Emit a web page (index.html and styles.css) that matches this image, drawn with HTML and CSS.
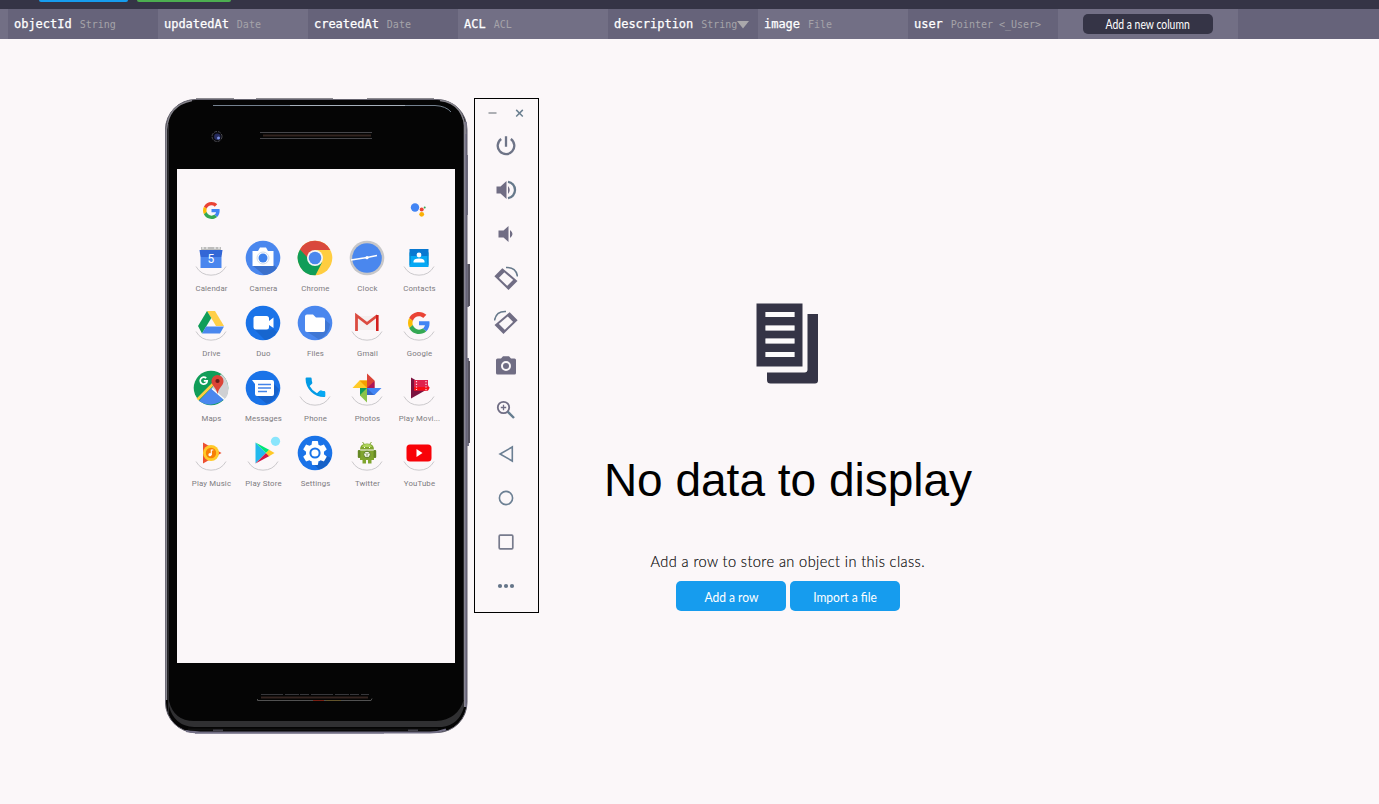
FILE: index.html
```html
<!DOCTYPE html>
<html lang="en">
<head>
<meta charset="utf-8">
<title>Data browser</title>
<link rel="stylesheet" href="styles.css">
</head>
<body>
<svg class="defs" width="0" height="0" aria-hidden="true">
  <symbol id="google" viewBox="0 0 48 48">
    <path fill="#ea4335" d="M24 9.5c3.54 0 6.71 1.22 9.21 3.6l6.85-6.85C35.9 2.38 30.47 0 24 0 14.62 0 6.51 5.38 2.56 13.22l7.98 6.19C12.43 13.72 17.74 9.5 24 9.5z"/>
    <path fill="#4285f4" d="M46.98 24.55c0-1.57-.15-3.09-.38-4.55H24v9.02h12.94c-.58 2.96-2.26 5.48-4.78 7.18l7.73 6c4.51-4.18 7.09-10.36 7.09-17.65z"/>
    <path fill="#fbbc05" d="M10.53 28.59c-.48-1.45-.76-2.99-.76-4.59s.27-3.14.76-4.59l-7.98-6.19C.92 16.46 0 20.12 0 24s.92 7.54 2.56 10.78l7.97-6.19z"/>
    <path fill="#34a853" d="M24 48c6.48 0 11.93-2.13 15.89-5.81l-7.73-6c-2.15 1.45-4.92 2.3-8.16 2.3-6.26 0-11.57-4.22-13.47-9.91l-7.98 6.19C6.51 42.62 14.62 48 24 48z"/>
  </symbol>
  <symbol id="arc" viewBox="0 0 36 36">
    <path d="M3 26.500A17.300 17.300 0 0 0 33 26.500" fill="none" stroke="#cbc9cc" stroke-width="1"/>
  </symbol>
</svg>

<div class="topbar"><span class="tab tab-blue"></span><span class="tab tab-green"></span></div>

<header class="columns">
  <div class="gutter"></div>
  <div class="col"><b>objectId</b><i>String</i></div>
  <div class="col light"><b>updatedAt</b><i>Date</i></div>
  <div class="col"><b>createdAt</b><i>Date</i></div>
  <div class="col light"><b>ACL</b><i>ACL</i></div>
  <div class="col"><b>description</b><i>String</i><svg class="caret" width="12" height="8" viewBox="0 0 12 8"><path d="M0 0h12L6 7.500z" fill="#aaa8ab"/></svg></div>
  <div class="col light"><b>image</b><i>File</i></div>
  <div class="col"><b>user</b><i>Pointer &lt;_User&gt;</i></div>
  <div class="add light"><button class="add-btn"><span>Add a new column</span></button></div>
</header>

<main class="main">
  <section class="phone">
    <svg class="frame" width="305" height="636" viewBox="165 98 305 636">
      <path d="M464 155h4v60h-4zM465 264h4v43h-4zM465 358h4v88h-4z" fill="#77748a"/>
      <path d="M469 264v42M469 361v82" stroke="#55525f" stroke-width="2"/>
      <path d="M196 98.500h38M256 98.500h77M367 98.500h67" stroke="#8c8a90" stroke-width="1"/>
      <rect x="165.500" y="99.500" width="301.500" height="633" rx="30" fill="#050505" stroke="#65636f"/>
      <path d="M166.500 130v570" stroke="#8a8992" stroke-width="1.500"/>
      <path d="M168.500 124v590M463.500 120v580" stroke="#29292d"/>
      <path d="M465.500 122v585" stroke="#77748a" stroke-width="2.500"/>
      <path d="M464.500 122v585" stroke="#9b9a9f" stroke-width=".7"/>
      <path d="M166.500 130Q168 105 192 100.500M440 100.500Q465 103 465.500 134" fill="none" stroke="#85838b" stroke-width="1.500"/>
      <path d="M213 105.500H435Q446 106 451 112" fill="none" stroke="#74818f"/>
      <path d="M290 105.500H405" stroke="#b2bcc7" stroke-width=".8"/>
      <path d="M169 701q5 20 25 20h242q22-1 28-22v8q-5 18-22 20H194q-20-1-25-21z" fill="#303032"/>
      <path d="M188 729.500h250" stroke="#111" stroke-width="2"/>
      <path d="M186 731q8 1.500 20 1.500h224q8 0 16-3" fill="none" stroke="#716e84" stroke-width="2"/>
      <path d="M195 733.500h189" stroke="#8e8b9d"/>
      <path d="M213 730.500h10M408 730.500h10" stroke="#44434c" stroke-width="2"/>
      <circle cx="217" cy="136.500" r="5" fill="#08080b" stroke="#4a4a52" stroke-dasharray="3 1"/>
      <circle cx="217.300" cy="136.700" r="3.200" fill="#262b5c"/>
      <circle cx="218.500" cy="138" r="1.500" fill="#7c8fe0"/>
      <path d="M260 132.500h112M260 138.500h112" stroke="#46464a"/>
      <path d="M263 135.500h108" stroke="#33241f" stroke-width="2"/>
      <path d="M261 694.500h108" stroke="#37373b" stroke-dasharray="22 2 14 1 9 2"/>
      <path d="M261 697.500h107" stroke="#352521" stroke-width="2"/>
      <path d="M257.500 699v1.500H371l1-2" fill="none" stroke="#515151"/>
      <path d="M313 700.500h11" stroke="#791f12"/><path d="M326 700.500h15" stroke="#62542b"/>
    </svg>
    <div class="screen">
      <div class="search">
        <svg width="17" height="17"><use href="#google"/></svg>
        <svg width="18" height="18" viewBox="0 0 18 18"><circle cx="6" cy="6.500" r="4.200" fill="#4285f4"/><circle cx="12.700" cy="8.500" r="2" fill="#ea4335"/><circle cx="12.700" cy="13.300" r="2.400" fill="#fbb105"/><circle cx="15.700" cy="6.500" r="1" fill="#34a853"/></svg>
      </div>
      <div class="apps">
        <div class="app"><svg viewBox="0 0 36 36"><use href="#arc"/><path d="M8 7h20v4H8z" fill="#bdbdbd"/><path d="M10 7v2M14 7v2M22 7v2M26 7v2" stroke="#fff"/><path d="M6.500 10h23l-1 7h-21z" fill="#3367d6"/><path d="M7.500 17h21v11h-21z" fill="#4a86ee"/><text x="18" y="23.300" text-anchor="middle" class="daynum">5</text></svg><span>Calendar</span></div>

        <div class="app"><svg viewBox="0 0 36 36"><circle cx="18" cy="18" r="17.300" fill="#4a87ee"/><path d="M18 26l11-1 3 3q-6 7-13 7l-11-9z" fill="#3b70cb"/><path d="M7.500 11h5.500l2-3.500h6l2 3.500h5.500v15h-21z" fill="#fff"/><circle cx="18" cy="18" r="6" fill="none" stroke="#d0dced"/><circle cx="18" cy="18" r="4.500" fill="#3f83ee"/></svg><span>Camera</span></div>

        <div class="app"><svg viewBox="0 0 36 36"><circle cx="18" cy="18" r="17.300" fill="#ffcd40"/><path d="M3 9.400A17.300 17.300 0 0 1 33.300 10H18L11 22z" fill="#d9493d"/><path d="M3 9.400A17.300 17.300 0 0 0 18.500 35.300L25 22.500H15z" fill="#109d58"/><circle cx="18" cy="18" r="8" fill="#f5f5f5"/><circle cx="18" cy="18" r="6.300" fill="#4a87ee"/></svg><span>Chrome</span></div>

        <div class="app"><svg viewBox="0 0 36 36"><circle cx="18" cy="18" r="17.300" fill="#c7c7c9"/><circle cx="18" cy="18" r="14.800" fill="#4a87ee"/><path d="M2 20l16-2.500 10-2" stroke="#fff" stroke-width="1.400"/><circle cx="18" cy="17.700" r="1.600" fill="#fff"/></svg><span>Clock</span></div>

        <div class="app"><svg viewBox="0 0 36 36"><use href="#arc"/><path d="M8.500 9h19v7h-19z" fill="#0878d1"/><path d="M8.500 16h19v11h-19z" fill="#06a8f4"/><path d="M8.500 12l1.200 2v9l-1.200 3zM27.500 12l-1.200 2v9l1.200 3z" fill="#0288d1"/><circle cx="18" cy="15" r="2.400" fill="#fff"/><path d="M12.500 22.500v-1q0-3 5.500-3t5.500 3v1z" fill="#fff"/></svg><span>Contacts</span></div>

        <div class="app"><svg viewBox="0 0 36 36"><use href="#arc"/><path d="M14 6h8l9 15h-8z" fill="#ffcf48"/><path d="M14 6l4.300 7L9 28.500 5 21z" fill="#0f9d58"/><path d="M13 21.500h18L27 28.500H9z" fill="#4a87ee"/></svg><span>Drive</span></div>

        <div class="app"><svg viewBox="0 0 36 36"><circle cx="18" cy="18" r="17.300" fill="#1a73e8"/><path d="M10 25h15l3-1 4 3q-5 7-12 8z" fill="#1766cf"/><rect x="8.500" y="11" width="15.500" height="13.500" rx="2.500" fill="#fff"/><path d="M24 16l4.500-3.500v10.500L24 20z" fill="#fff"/></svg><span>Duo</span></div>

        <div class="app"><svg viewBox="0 0 36 36"><circle cx="18" cy="18" r="17.300" fill="#4a87ee"/><path d="M9 26l18 1v-13l6 5q-1 11-11 15.500z" fill="#3f77d4"/><path d="M10 9.500h6l3 3h7q2 0 2 2v10.500q0 2-2 2H10q-2 0-2-2V11.500q0-2 2-2z" fill="#fff"/></svg><span>Files</span></div>

        <div class="app"><svg viewBox="0 0 36 36"><use href="#arc"/><path d="M9 11h18v14H9z" fill="#f5f0f0"/><path d="M7.500 26V10.500L18 18.500l10.500-8" fill="none" stroke="#db4b40" stroke-width="2.800"/><path d="M28.300 10v16" stroke="#d21f1d" stroke-width="2.600"/></svg><span>Gmail</span></div>

        <div class="app"><svg viewBox="0 0 36 36"><use href="#arc"/><use href="#google" x="7" y="7" width="22" height="22"/></svg><span>Google</span></div>

        <div class="app"><svg viewBox="0 0 36 36"><circle cx="18" cy="18" r="17.300" fill="#109d58"/><path d="M28 4q7 5 7.300 14T31 29L19 18z" fill="#cfd0d3"/><path d="M6 31q12 8 25-1.500L18.500 17.500z" fill="#4a87ee"/><path d="M4.500 29.500L25 9" stroke="#ffcd40" stroke-width="2.600"/><path d="M19 18.500l12.500 11" stroke="#fff" stroke-width="1.500"/><path d="M13.200 8.200A3.500 3.500 0 1 0 14.200 10.900H10.800" fill="none" stroke="#fff" stroke-width="1.700"/><path d="M18.500 11a6 6 0 0 1 12 0c0 5-4.700 6-6 13-1.300-7-6-8-6-13z" fill="#db4437"/><circle cx="24.500" cy="11" r="2.100" fill="#671d19"/></svg><span>Maps</span></div>

        <div class="app"><svg viewBox="0 0 36 36"><circle cx="18" cy="18" r="17.300" fill="#1a73e8"/><path d="M11 25l16 1 2-12 5 5q-2 11-12 15z" fill="#1762cb"/><path d="M7 10h20q2 0 2 2v12q0 2-2 2H12q-2 0-2-2V14z" fill="#fff"/><path d="M13 14.500h13M13 18h13M13 21.500h9" stroke="#4384e8" stroke-width="1.500"/></svg><span>Messages</span></div>

        <div class="app"><svg viewBox="0 0 36 36"><use href="#arc"/><path transform="translate(5.200 5.500) scale(1.050)" d="M4.200 2H8q1 0 1 1 0 2 .6 3.600.2.700-.3 1.200L7.100 10q2.400 4.600 7 6.900l2.200-2.200q.5-.5 1.200-.3Q19 15 21 15q1 0 1 1v3.500q0 1-1 1C11.300 20.500 3.200 12.700 3.200 3q0-1 1-1z" fill="#039be5"/><path d="M22 22l2-1.500 4 1v5l-6.500-1.500z" fill="#05a9f4"/></svg><span>Phone</span></div>

        <div class="app"><svg viewBox="0 0 36 36"><use href="#arc"/><path d="M18 18V3.500l7.500 7v7.500z" fill="#db4437"/><path d="M18 18l7.500-7v7z" fill="#ad1457"/><path d="M18 18h14.500l-7 7H18z" fill="#4285f4"/><path d="M18 18l7 7h-7z" fill="#3467c5"/><path d="M18 18v14.500l-7-7V18z" fill="#8bc34a"/><path d="M18 18l-7 7v-7z" fill="#0f9d58"/><path d="M18 18H3.500l7-7.500H18z" fill="#ffca28"/><path d="M18 18l-7.500-7.500H18z" fill="#f4a000"/></svg><span>Photos</span></div>

        <div class="app"><svg viewBox="0 0 36 36"><use href="#arc"/><path d="M10 7.500L28.500 18 10 28.500z" fill="#7b123f"/><path d="M13 10h14v5l1.500 3-1.500 2.500H13z" fill="#e0224c"/><path d="M13 17h15.500L27 20.500H13z" fill="#f70d15"/><path d="M15.500 11v9M25 11v9" stroke="#ffdce2" stroke-width="1.200" stroke-dasharray="1.200 1.500"/></svg><span>Play Movi...</span></div>

        <div class="app"><svg viewBox="0 0 36 36"><use href="#arc"/><path d="M10 7.500L28.500 18 10 28.500z" fill="#ed5030"/><circle cx="18" cy="18" r="8" fill="#ffc928"/><circle cx="18" cy="18" r="5.200" fill="#f77f05"/><circle cx="17" cy="19.700" r="1.600" fill="#fff"/><path d="M18.300 20v-5h2" fill="none" stroke="#fff" stroke-width="1.100"/></svg><span>Play Music</span></div>

        <div class="app"><svg viewBox="0 0 36 36"><use href="#arc"/><path d="M10.500 7.500L21 18 10.500 28.500z" fill="#22b9ed"/><path d="M10.500 7.500L24.500 15 21 18z" fill="#00e676"/><path d="M10.500 28.500L24.500 21 21 18z" fill="#d41745"/><path d="M24 14.700L29.500 18 24 21.300 21 18z" fill="#ffc928"/><circle cx="30.500" cy="6.300" r="4.600" fill="#8ae5fc"/></svg><span>Play Store</span></div>

        <div class="app"><svg viewBox="0 0 36 36"><circle cx="18" cy="18" r="17.300" fill="#1a73e8"/><path d="M13 25l9 3 6-8 6 3q-3 9-12 11.500z" fill="#1661c7"/><path transform="translate(3.600 3.600) scale(1.200)" fill="#fff" d="M19.430 12.980c.04-.32.07-.64.07-.98s-.03-.66-.07-.98l2.110-1.650c.19-.15.24-.42.12-.64l-2-3.460c-.12-.22-.39-.3-.61-.22l-2.490 1c-.52-.4-1.080-.73-1.690-.98l-.38-2.650A.49.49 0 0 0 14 2h-4c-.25 0-.46.18-.49.42l-.38 2.650c-.61.25-1.170.59-1.690.98l-2.490-1c-.23-.09-.49 0-.61.22l-2 3.460c-.13.22-.07.49.12.64l2.110 1.650c-.04.32-.07.65-.07.98s.03.66.07.98l-2.110 1.650c-.19.15-.24.42-.12.64l2 3.460c.12.22.39.3.61.22l2.490-1c.52.4 1.080.73 1.690.98l.38 2.650c.03.24.24.42.49.42h4c.25 0 .46-.18.49-.42l.38-2.650c.61-.25 1.170-.59 1.690-.98l2.490 1c.23.09.49 0 .61-.22l2-3.460c.12-.22.07-.49-.12-.64z"/><circle cx="18" cy="18" r="4.600" fill="#fff" stroke="#1a73e8" stroke-width="2"/></svg><span>Settings</span></div>

        <div class="app"><svg viewBox="0 0 36 36"><use href="#arc"/><path d="M11 14.500q0-6 7-6t7 6zM11 15.500h14V25H11zM13.500 24h3.500v4.500h-3.500zM19 24h3.500v4.500H19z" fill="#80a52e"/><path d="M13.500 7l2 2.500M22.500 7l-2 2.500" stroke="#82a733"/><path d="M13 12q1-3 5-3t5 3z" fill="#add35c"/><rect x="8.800" y="15" width="2.600" height="8" rx="1" fill="#658825"/><rect x="24.600" y="15" width="2.600" height="8" rx="1" fill="#658825"/><circle cx="18" cy="19.500" r="3.300" fill="#f4f5e9" stroke="#597c20"/><path d="M16.500 18l1.500 1.500 1.500-1.500M18 19.500v2" stroke="#66833d" fill="none" stroke-width=".8"/><path d="M15 12.500h1M20 12.500h1" stroke="#fff"/></svg><span>Twitter</span></div>

        <div class="app"><svg viewBox="0 0 36 36"><use href="#arc"/><rect x="5.500" y="9.500" width="25" height="17" rx="3.500" fill="#f80208"/><path d="M15.500 14l6 4-6 4z" fill="#fff"/></svg><span>YouTube</span></div>
      </div>
    </div>
  </section>

  <aside class="tools">
    <div class="winctl">
      <svg width="9" height="9" viewBox="0 0 9 9"><path d="M.5 4h8" stroke="#9a9da3" stroke-width="1.600"/></svg>
      <svg width="9" height="9" viewBox="0 0 9 9"><path d="M1.200 .9l6.600 6.600M7.800 .9L1.200 7.500" stroke="#6b8091" stroke-width="1.500"/></svg>
    </div>
    <div class="tool"><svg viewBox="0 0 24 24"><path d="M7.200 5A8.300 8.300 0 1 0 16.800 5M12 2.300v10.400" fill="none" stroke="#6e7487" stroke-width="2.300"/></svg></div>
    <div class="tool"><svg viewBox="0 0 24 24"><path d="M2.500 8.500h4l6-5.500v18l-6-5.500h-4zM14 8q3.500 4 0 8z" fill="#706d84"/><path d="M14 3.800a8.300 8.300 0 0 1 0 16.400" fill="none" stroke="#66798b" stroke-width="2.300"/></svg></div>
    <div class="tool"><svg viewBox="0 0 24 24"><path d="M4.500 8.500h5l5-4.500v16l-5-4.500h-5zM16 8q5 4 0 8z" fill="#706d84"/></svg></div>
    <div class="tool"><svg viewBox="0 0 24 24"><path d="M8.500 3.500L1.800 10.200 14.500 22.500 22 15z" fill="none" stroke="#706d84" stroke-width="2"/><path d="M2 10l6.500-6.500 2.400 2.300-6.600 6.600zM14.500 22.500l7.500-7.500-2-2-7.500 7.500z" fill="#706d84"/><path d="M12 1.500q10-.5 11.500 9" fill="none" stroke="#66798b" stroke-width="1.600"/></svg></div>
    <div class="tool"><svg viewBox="0 0 24 24"><g transform="matrix(-1 0 0 1 24 0)"><path d="M8.500 3.500L1.800 10.200 14.500 22.500 22 15z" fill="none" stroke="#706d84" stroke-width="2"/><path d="M2 10l6.500-6.500 2.400 2.300-6.600 6.600zM14.500 22.500l7.500-7.500-2-2-7.500 7.500z" fill="#706d84"/><path d="M12 1.500q10-.5 11.500 9" fill="none" stroke="#66798b" stroke-width="1.600"/></g></svg></div>
    <div class="tool"><svg viewBox="0 0 24 24"><path fill-rule="evenodd" d="M3.500 4.500H7L9 2.300h6l2 2.200h3.500Q22 4.500 22 6v13q0 1.500-1.500 1.500h-17Q2 20.500 2 19V6q0-1.500 1.500-1.500zM12 7a5 5 0 1 0 0 10 5 5 0 0 0 0-10z" fill="#706d84"/><circle cx="12" cy="12" r="3" fill="#706d84"/></svg></div>
    <div class="tool"><svg viewBox="0 0 24 24"><circle cx="9.500" cy="9.500" r="5.700" fill="none" stroke="#706d84" stroke-width="1.800"/><path d="M9.500 6.800v5.400M6.800 9.500h5.400" stroke="#706d84" stroke-width="1.300"/><path d="M13.700 13.700l6.300 6.300" stroke="#657c8f" stroke-width="2.400"/></svg></div>
    <div class="tool"><svg viewBox="0 0 24 24"><path d="M18.300 5v14L6 12z" fill="none" stroke="#6b7f93" stroke-width="1.600"/></svg></div>
    <div class="tool"><svg viewBox="0 0 24 24"><circle cx="12" cy="12" r="6.600" fill="none" stroke="#6b7f93" stroke-width="1.600"/></svg></div>
    <div class="tool"><svg viewBox="0 0 24 24"><rect x="5.200" y="5.200" width="13.600" height="13.600" rx="1" fill="none" stroke="#777b8d" stroke-width="1.700"/></svg></div>
    <div class="tool"><svg viewBox="0 0 24 24"><g fill="#657589"><circle cx="6" cy="12" r="2.100"/><circle cx="12" cy="12" r="2.100"/><circle cx="18" cy="12" r="2.100"/></g></svg></div>
  </aside>

  <section class="empty">
    <svg class="pages" width="62" height="81" viewBox="0 0 62 81"><path fill-rule="evenodd" fill="#353446" d="M.5.500H46.500V63.500H.5zM9.500 9v5h29V9zM9.500 22.500v5h29v-5zM9.500 35.500v5h29v-5zM9.500 49v5h29v-5z"/><path fill="#353446" d="M51.500 11h10.500v66.500q0 3-3 3H14.500q-3.500 0-3.500-3.500v-7.500h37.500q3 0 3-3z"/><path d="M9.500 9h29v5h-29zM9.500 22.500h29v5h-29zM9.500 35.500h29v5h-29zM9.500 49h29v5h-29z" fill="#fff" fill-opacity=".5"/></svg>
    <h1>No data to display</h1>
    <p><span>Add a row to store an object in this class.</span></p>
    <div class="actions"><button><span class="t-row">Add a row</span></button><button><span class="t-file">Import a file</span></button></div>
  </section>
</main>
</body>
</html>
```

FILE: styles.css
```css
* { box-sizing: border-box; }
body {
  margin: 0;
  height: 804px;
  overflow: hidden;
  background: #fbf7f9;
  font-family: Lato, sans-serif;
}
svg { display: block; flex: none; }
.defs { position: absolute; }
button { border: 0; padding: 0; display: flex; align-items: center; justify-content: center; color: #fff; font-family: Lato, sans-serif; white-space: nowrap; }
button span { display: block; }

.topbar { height: 9px; padding-left: 39px; background: #353446; display: flex; gap: 9px; }
.tab { height: 2px; border-radius: 0 0 3px 3px; }
.tab-blue { width: 89px; background: #169cee; }
.tab-green { width: 94px; background: #4cae50; }

.columns { height: 30px; display: flex; background: #66637a; }
.gutter { width: 8px; background: #726f85; }
.light { background: #726f85; }
.col { width: 150px; padding-left: 6px; display: flex; align-items: center; white-space: nowrap; font-family: "DejaVu Sans Mono", monospace; }
.col b { font-size: 12px; font-weight: 400; color: #fff; letter-spacing: -.02px; -webkit-text-stroke: .25px #fff; }
.col i { margin-left: 8px; font: 10px "DejaVu Sans Mono", monospace; color: #a5a3a9; }
.caret { margin-top: 1px; }
.add { width: 180px; display: flex; align-items: center; justify-content: center; }
.add-btn { width: 130px; height: 20px; border-radius: 5px; background: #353446; font-size: 12.5px; }
.add-btn span { transform: scaleX(.83); }

.main { display: flex; align-items: flex-start; padding: 59px 0 0 165px; }
.phone { width: 305px; height: 636px; position: relative; flex: none; }
.frame { position: absolute; inset: 0; }
.screen { position: relative; margin: 71px 0 0 12px; width: 278px; height: 494px; background: #fbf7f9; padding: 33px 10px 0 8px; }
.search { height: 38px; padding: 0 18px; display: flex; align-items: flex-start; justify-content: space-between; }
.search svg + svg { margin-top: -1px; }
.apps { display: grid; grid-template-columns: repeat(5, 52px); }
.app { height: 65px; display: flex; flex-direction: column; align-items: center; gap: 8px; white-space: nowrap; font: 7.8px/10px Roboto, sans-serif; letter-spacing: .16px; color: #7d7b80; }
.app svg { width: 36px; height: 36px; }
.app span { padding-left: 1px; }
.daynum { font: 12px Roboto, sans-serif; fill: #fff; }

.tools { width: 65px; height: 515px; flex: none; margin-left: 4px; padding-right: 1px; border: 1px solid #000; }
.winctl { height: 25px; padding: 3px 0 0 0; display: flex; align-items: center; justify-content: center; gap: 18px; }
.tool { height: 44px; display: flex; align-items: center; justify-content: center; }
.tool svg { width: 24px; height: 24px; }

.empty { width: 498px; padding-top: 205px; display: flex; flex-direction: column; align-items: center; }
.pages { margin-right: 2px; }
.empty h1 { margin: 68px 0 0; font: 400 46px/56px "Liberation Sans", Arial, sans-serif; color: #000; white-space: nowrap; }
.empty p { margin: 41px 0 0; font-size: 16px; line-height: 24px; color: #000; white-space: nowrap; font-weight: 300; }
.empty p span { display: block; transform: scaleX(.91); letter-spacing: .45px; -webkit-text-stroke: .15px #000; }
.actions { display: flex; gap: 4px; margin-top: 8px; }
.actions button { width: 110px; height: 30px; border-radius: 5px; background: #169cee; font-size: 14px; }
.t-row { transform: scaleX(.86); }
.t-file { transform: scaleX(.86); }
```
